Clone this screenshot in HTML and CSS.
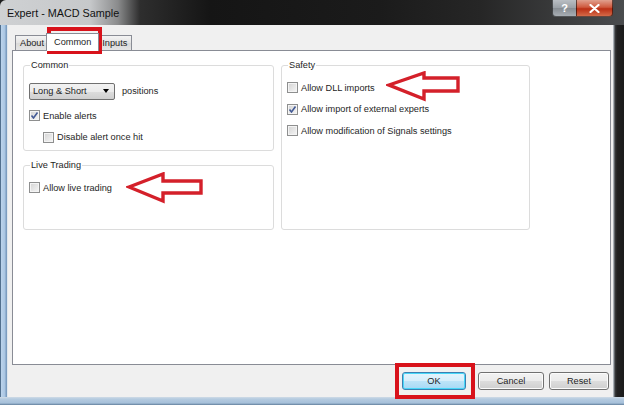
FILE: index.html
```html
<!DOCTYPE html>
<html>
<head>
<meta charset="utf-8">
<link rel="stylesheet" href="styles.css">
</head>
<body>
<div class="window">
  <div class="titlebar">
    <span class="title">Expert - MACD Sample</span>
    <div class="caption-btns">
      <div class="cap help">?</div>
      <div class="cap close">
        <svg width="11" height="9" viewBox="0 0 11 9"><path d="M1.5 1 L9.5 8 M9.5 1 L1.5 8" stroke="#fff" stroke-width="2.2" stroke-linecap="round"/></svg>
      </div>
    </div>
  </div>
  <div class="middle">
    <div class="frame-left"></div>
    <div class="client">
      <div class="tabs">
        <div class="tab">About</div>
        <div class="tab active">Common</div>
        <div class="tab">Inputs</div>
      </div>
      <div class="panel">
        <div class="col">
          <fieldset class="group g-common">
            <legend>Common</legend>
            <div class="row row-select">
              <div class="select"><span>Long &amp; Short</span><span class="caret"></span></div>
              <span class="lbl">positions</span>
            </div>
            <div class="row"><span class="cb checked"></span><span class="lbl">Enable alerts</span></div>
            <div class="row indent"><span class="cb"></span><span class="lbl">Disable alert once hit</span></div>
          </fieldset>
          <fieldset class="group g-live">
            <legend>Live Trading</legend>
            <div class="row"><span class="cb"></span><span class="lbl">Allow live trading</span></div>
          </fieldset>
        </div>
        <fieldset class="group g-safety">
          <legend>Safety</legend>
          <div class="row"><span class="cb"></span><span class="lbl">Allow DLL imports</span></div>
          <div class="row"><span class="cb checked"></span><span class="lbl">Allow import of external experts</span></div>
          <div class="row"><span class="cb"></span><span class="lbl">Allow modification of Signals settings</span></div>
        </fieldset>
      </div>
      <div class="buttons">
        <div class="btn default">OK</div>
        <div class="btn cancel">Cancel</div>
        <div class="btn reset">Reset</div>
      </div>
    </div>
    <div class="frame-right"></div>
  </div>
  <div class="frame-bottom"></div>

  <div class="mark mark-tab"></div>
  <div class="mark mark-ok"></div>
  <svg class="arrow arrow-live" width="80" height="32" viewBox="0 0 80 32">
    <path d="M3 15 L37 2 L37 9 L75 9 L75 21 L37 21 L37 29 Z" fill="none" stroke="#d4202a" stroke-width="3.4" stroke-linejoin="miter"/>
  </svg>
  <svg class="arrow arrow-dll" width="78" height="32" viewBox="0 0 78 32">
    <path d="M3 14 L38 2 L38 7 L72 7 L72 20 L38 20 L38 28 Z" fill="none" stroke="#d4202a" stroke-width="3.4" stroke-linejoin="miter"/>
  </svg>
</div>
</body>
</html>
```
FILE: styles.css
```css
html, body {
  margin: 0;
  padding: 0;
}
body {
  width: 624px;
  height: 405px;
  overflow: hidden;
  font-family: "Liberation Sans", Arial, sans-serif;
  font-size: 9.2px;
  color: #1e1e1e;
}
.window {
  position: relative;
  width: 624px;
  height: 405px;
  display: flex;
  flex-direction: column;
  background: #1d1d1d;
}
.titlebar {
  height: 25px;
  display: flex;
  align-items: flex-start;
  background: linear-gradient(90deg, #cfd1d3 0, #c6c8ca 90px, #8a8b8c 118px, #2e2e2e 140px, #151515 210px, #1b1b1b 380px, #262626 480px, #3a3b3c 560px, #4a4c4e 624px);
  border-top-left-radius: 6px;
}
.title {
  font-family: "Liberation Sans", Arial, sans-serif;
  font-size: 10.8px;
  color: #111;
  margin: 7px 0 0 7px;
}
.caption-btns {
  margin-left: auto;
  margin-right: 11px;
  display: flex;
}
.cap {
  height: 17px;
  display: flex;
  align-items: center;
  justify-content: center;
  box-sizing: border-box;
  border: 1px solid rgba(0,0,0,0.55);
  border-top: none;
}
.help {
  width: 24px;
  background: linear-gradient(#b9bec3, #9aa0a6 50%, #868c92 51%, #a8aeb4);
  color: #fff;
  font-weight: bold;
  font-size: 11px;
  border-bottom-left-radius: 4px;
  border-right: none;
}
.close {
  width: 37px;
  background: linear-gradient(#e0a08e, #cf5a3f 45%, #bb2f15 55%, #d46a48);
  border-bottom-right-radius: 4px;
}
.middle {
  flex: 1;
  display: flex;
}
.frame-left {
  width: 8px;
  background: linear-gradient(90deg, #52708e 0, #52708e 1px, #bcd4ec 1px, #a9c5e2 5px, #7c9dc0 6px, #7c9dc0 7px, #dfe7ee 7px);
}
.frame-right {
  width: 11px;
  background: linear-gradient(90deg, #c9d0d6 0, #8a9096 1px, #3a3c3e 2px, #222 4px, #1a1a1a 11px);
}
.frame-bottom {
  height: 8px;
  background: linear-gradient(#cfdbe6 0, #b5cbe0 2px, #a6c0da 6px, #627f9c 8px);
}
.client {
  flex: 1;
  background: #f0f0f0;
  display: flex;
  flex-direction: column;
  padding: 8px 2px 0 4px;
}
.tabs {
  display: flex;
  align-items: flex-end;
  height: 17px;
  padding-left: 3px;
}
.tab {
  height: 15px;
  box-sizing: border-box;
  border: 1px solid #898c95;
  border-bottom: none;
  background: linear-gradient(#f3f3f3, #e3e3e3 50%, #d9d9d9 51%, #e5e5e5);
  padding: 2px 4px 0;
  margin-right: -1px;
  color: #1e1e1e;
}
.tab.active {
  height: 18px;
  background: #fff;
  padding: 3px 7px 0;
  margin: 0 -2px;
  position: relative;
  z-index: 1;
  margin-bottom: -1px;
}
.panel {
  flex: 1;
  background: #fff;
  border: 1px solid #898c95;
  display: flex;
  gap: 7px;
  padding: 8px 0 0 10px;
  align-items: flex-start;
}
.col {
  display: flex;
  flex-direction: column;
  gap: 8px;
}
.group {
  margin: 0;
  box-sizing: border-box;
  width: 251px;
  border: 1px solid #dcdcdc;
  border-radius: 3px;
  padding: 6px 0 0 5px;
}
.group legend {
  padding: 0 1px;
  margin-left: 1px;
  line-height: 12px;
}
.g-common { height: 92px; }
.g-live { height: 71px; }
.g-safety { height: 171px; width: 249px; }
.row {
  display: flex;
  align-items: center;
  height: 21.5px;
}
.row-select { height: 28px; }
.indent { padding-left: 14px; }
.select {
  width: 86px;
  height: 17px;
  box-sizing: border-box;
  border: 1px solid #707070;
  border-radius: 2px;
  background: linear-gradient(#f2f2f2, #ebebeb 50%, #dddddd 51%, #cfcfcf);
  display: flex;
  align-items: center;
  padding-left: 3px;
}
.caret {
  margin-left: auto;
  margin-right: 5px;
  width: 0;
  height: 0;
  border-left: 3.5px solid transparent;
  border-right: 3.5px solid transparent;
  border-top: 4px solid #000;
}
.row-select .lbl { margin-left: 7px; }
.cb {
  width: 11px;
  height: 11px;
  box-sizing: border-box;
  border: 1px solid #8e8f8f;
  background: linear-gradient(135deg, #d3d3d3, #f6f6f6);
  box-shadow: inset 0 0 0 1px #f4f4f4;
  margin-right: 3px;
  flex: none;
}
.cb.checked {
  background-image: url("data:image/svg+xml;utf8,<svg xmlns='http://www.w3.org/2000/svg' width='9' height='9' viewBox='0 0 9 9'><path d='M1.5 4.5 L3.5 7 L7.5 1.5' fill='none' stroke='%23435a96' stroke-width='1.6'/></svg>"), linear-gradient(135deg, #d3d3d3, #f6f6f6);
  background-repeat: no-repeat;
  background-position: center;
}
.buttons {
  height: 32px;
  display: flex;
  align-items: center;
  justify-content: flex-end;
  padding-right: 2px;
}
.btn {
  width: 64px;
  height: 18px;
  box-sizing: border-box;
  border: 1px solid #707070;
  border-radius: 3px;
  background: linear-gradient(#f2f2f2, #ebebeb 50%, #dddddd 51%, #cfcfcf);
  display: flex;
  align-items: center;
  justify-content: center;
  box-shadow: inset 0 0 0 1px #fbfbfb;
}
.btn.default {
  border-color: #3c7fb1;
  background: linear-gradient(#e5f4fc, #d6eefb 50%, #bde4f8 51%, #a7d9f5);
  box-shadow: inset 0 0 0 1px #48d7f8;
  margin-right: 12px;
}
.btn.cancel {
  width: 66px;
  margin-right: 5px;
}
.btn.reset {
  width: 60px;
}
.mark {
  position: absolute;
  border: 4px solid #d8121b;
  box-sizing: border-box;
}
.mark-tab {
  left: 47px;
  top: 27px;
  width: 55px;
  height: 27px;
}
.mark-ok {
  left: 395px;
  top: 363px;
  width: 80px;
  height: 36px;
}
.arrow {
  position: absolute;
}
.arrow-live {
  left: 126px;
  top: 172px;
}
.arrow-dll {
  left: 386px;
  top: 71px;
}
```
